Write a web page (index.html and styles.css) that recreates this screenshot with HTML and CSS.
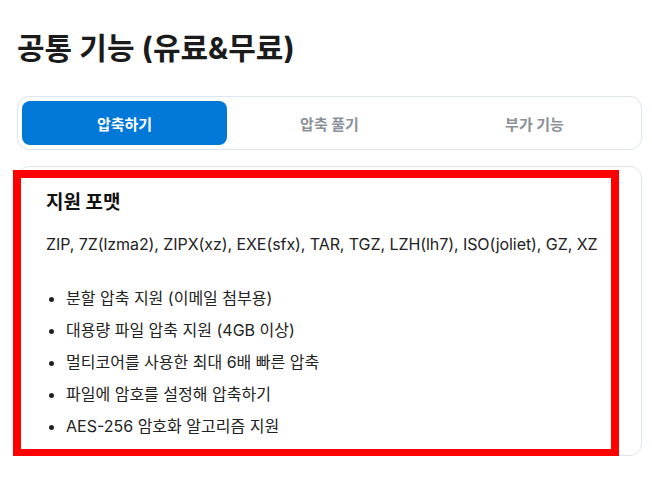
FILE: index.html
```html
<!DOCTYPE html>
<html lang="ko">
<head>
<meta charset="utf-8">
<link rel="stylesheet" href="styles.css">
</head>
<body>
<main class="page">
  <h1 class="title">공통 기능 (유료&amp;무료)</h1>
  <div class="tabs">
    <button class="tab active">압축하기</button>
    <button class="tab">압축 풀기</button>
    <button class="tab">부가 기능</button>
  </div>
  <section class="card">
    <h2 class="card-title">지원 포맷</h2>
    <p class="formats">ZIP, 7Z(lzma2), ZIPX(xz), EXE(sfx), TAR, TGZ, LZH(lh7), ISO(joliet), GZ, XZ</p>
    <ul class="features">
      <li>분할 압축 지원 (이메일 첨부용)</li>
      <li>대용량 파일 압축 지원 (4GB 이상)</li>
      <li>멀티코어를 사용한 최대 6배 빠른 압축</li>
      <li>파일에 암호를 설정해 압축하기</li>
      <li>AES-256 암호화 알고리즘 지원</li>
    </ul>
  </section>
  <div class="highlight"></div>
</main>
</body>
</html>
```

FILE: styles.css
```css
* { box-sizing: border-box; }
html, body { margin: 0; padding: 0; background: #fff; }
body {
  font-family: Inter, "Noto Sans CJK KR", sans-serif;
  color: #222;
}
.page {
  position: relative;
  padding: 26px 10px 0 17px;
}
.title {
  margin: 0;
  font-family: Inter, "Noto Sans CJK KR", sans-serif;
  font-size: 30px;
  font-weight: 700;
  line-height: 44px;
  color: #1b1b1b;
}
.tabs {
  margin-top: 26px;
  display: grid;
  grid-template-columns: 1fr 1fr 1fr;
  padding: 4px;
  border: 1px solid #dde5ef;
  border-radius: 12px;
  height: 54px;
}
.tab {
  border: 0;
  background: transparent;
  border-radius: 8px;
  font-family: Inter, "Noto Sans CJK KR", sans-serif;
  font-size: 15px;
  font-weight: 700;
  color: #8b9099;
  cursor: pointer;
}
.tab.active {
  background: #0078d7;
  color: #fff;
}
.card {
  margin-top: 16px;
  border: 1px solid #dde5ef;
  border-radius: 12px;
  padding: 22px 28px 12px 28px;
  height: 290px;
}
.card-title {
  margin: 0;
  font-size: 19px;
  font-weight: 700;
  line-height: 27px;
  color: #111;
}
.formats {
  margin: 16px 0 0;
  font-size: 16px;
  line-height: 24px;
  letter-spacing: -0.07px;
}
.features {
  margin: 30px 0 0;
  padding-left: 20px;
  font-size: 16px;
  line-height: 24px;
}
.features li { margin-bottom: 8px; }
.highlight {
  position: absolute;
  left: 13px;
  top: 170px;
  width: 606px;
  height: 287px;
  border: 8px solid #ff0000;
  pointer-events: none;
}
```
